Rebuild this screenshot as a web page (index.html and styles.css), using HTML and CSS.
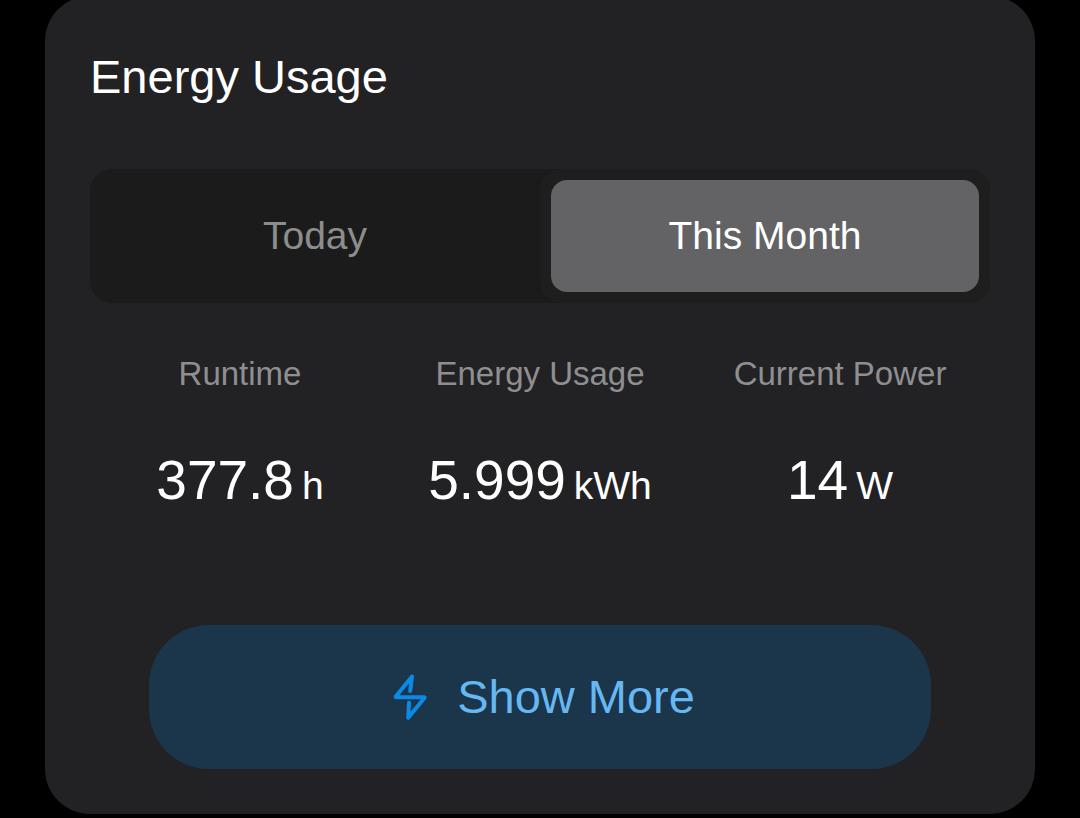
FILE: index.html
```html
<!DOCTYPE html>
<html lang="en">
<head>
<meta charset="utf-8">
<meta name="viewport" content="width=device-width, initial-scale=1">
<title>Energy Usage</title>
<link rel="stylesheet" href="styles.css">
</head>
<body>
<main class="card">
  <h1 class="card-title">Energy Usage</h1>
  <div class="segments" role="group" aria-label="Period">
    <button class="segment" type="button" aria-pressed="false"><span class="segment-label">Today</span></button>
    <button class="segment segment-active" type="button" aria-pressed="true"><span class="segment-label">This Month</span></button>
  </div>
  <dl class="stats">
    <div class="stat">
      <dt class="stat-label">Runtime</dt>
      <dd class="stat-value">377.8<span class="stat-unit">h</span></dd>
    </div>
    <div class="stat">
      <dt class="stat-label">Energy Usage</dt>
      <dd class="stat-value">5.999<span class="stat-unit">kWh</span></dd>
    </div>
    <div class="stat">
      <dt class="stat-label">Current Power</dt>
      <dd class="stat-value">14<span class="stat-unit">W</span></dd>
    </div>
  </dl>
  <button class="more" type="button">
    <svg class="more-icon" viewBox="0 0 34 48" aria-hidden="true">
      <path d="M17.2 18 L19 3.4 L2.8 23.4 Q2.4 24.2 3.4 24.2 L31 24.2 Q32 24.2 31.4 25 L15.2 44.8 L16 29.8"/>
    </svg>
    <span>Show More</span>
  </button>
</main>
</body>
</html>
```
FILE: styles.css
```css
* {
  box-sizing: border-box;
}

body {
  margin: 0;
  background: #000;
  color: #fff;
  font-family: "Liberation Sans", Arial, sans-serif;
}

button {
  border: 0;
  background: none;
  color: inherit;
  font-family: inherit;
  cursor: pointer;
}

.card {
  display: flex;
  flex-direction: column;
  margin: -4px 45px 4px;
  padding: 54px 45px 45px;
  border-radius: 45px;
  background: #222224;
}

.card-title {
  margin: 0 0 65px;
  font-size: 47px;
  font-weight: 400;
  line-height: 54px;
}

.segments {
  display: grid;
  grid-template-columns: 1fr 1fr;
  border-radius: 22px;
  background: #1b1b1b;
}

.segment {
  padding: 11px;
  border-radius: 22px;
  color: #8d8d8d;
  font-size: 39px;
  line-height: 48px;
}

.segment-label {
  display: block;
  padding: 32px 0;
  border-radius: 16px;
}

.segment-active {
  background: #1e1e1e;
  color: #fff;
}

.segment-active .segment-label {
  background: #636365;
}

.stats {
  display: grid;
  grid-template-columns: repeat(3, 1fr);
  margin: 51px 0 113px;
  text-align: center;
}

.stat {
  display: grid;
  gap: 54px;
}

.stat-label {
  color: #8f8f91;
  font-size: 33px;
  line-height: 40px;
}

.stat-value {
  margin: 0;
  font-size: 55px;
  line-height: 64px;
}

.stat-unit {
  margin-left: 8px;
  font-size: 39px;
  line-height: 1;
}

.more {
  display: flex;
  align-items: center;
  justify-content: center;
  gap: 30px;
  margin: 0 59px;
  padding: 44px 0 44px 8px;
  border-radius: 60px;
  background: #1b354a;
  color: #66b8f2;
  font-size: 47px;
  line-height: 56px;
}

.more-icon {
  width: 34px;
  height: 48px;
  fill: none;
  stroke: #0a8ae6;
  stroke-width: 4;
  stroke-linecap: round;
  stroke-linejoin: round;
}
```
